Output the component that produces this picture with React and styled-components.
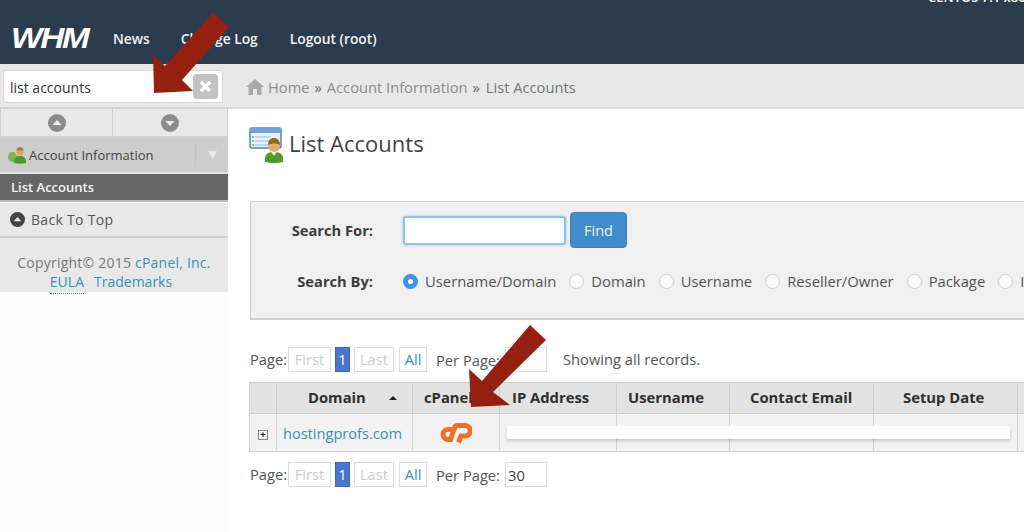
import React from 'react';
import styled, { createGlobalStyle } from 'styled-components';

const GlobalStyle = createGlobalStyle`
  html, body {
    margin: 0;
    width: 1024px;
    height: 532px;
    overflow: hidden;
    background: #fff;
    font-family: "Open Sans", "Liberation Sans", sans-serif;
  }
  * { box-sizing: border-box; }
`;

const Page = styled.div`
  position: relative;
  width: 1024px;
  height: 532px;
  overflow: hidden;
`;

const Header = styled.header`
  height: 64px;
  background: #2b3c4e;
  overflow: hidden;
`;

const ServerInfo = styled.div`
  height: 15px;
  margin-top: -3px;
  padding-left: 928px;
  font-size: 13px;
  line-height: 0;
  font-weight: 600;
  color: #fff;
  white-space: nowrap;
`;

const Nav = styled.nav`
  display: flex;
  align-items: center;
  height: 52px;
  padding-left: 11px;
`;

const Logo = styled.div`
  width: 102px;
  font-family: "Liberation Sans", sans-serif;
  font-size: 29px;
  font-weight: 700;
  font-style: italic;
  letter-spacing: -2px;
  color: #fff;
  transform: scaleX(1.15);
  transform-origin: left center;
`;

const NavLink = styled.a`
  margin-right: ${p => p.$gap}px;
  font-size: 13.8px;
  font-weight: 600;
  color: #f2f4f5;
`;

const Layout = styled.div`
  display: grid;
  grid-template-columns: 228px 1fr;
  height: 468px;
`;

const Sidebar = styled.aside`
  display: flex;
  flex-direction: column;
  background: #fdfdfd;
`;

const SearchRow = styled.div`
  height: 45px;
  padding: 6px 5px 5px 3px;
  background: #e8e8e8;
  border-bottom: 2px solid #d4d4d4;
`;

const SearchBox = styled.div`
  display: flex;
  align-items: center;
  justify-content: space-between;
  height: 33px;
  padding: 2px 4px 0 6px;
  background: #fff;
  border: 1px solid #d8d8d8;
  border-radius: 3px;
  font-size: 14px;
  color: #333;
`;

const ClearButton = styled.span`
  display: flex;
  align-items: center;
  justify-content: center;
  width: 25px;
  height: 25px;
  margin-top: -2px;
  background: #c2c2c2;
  border-radius: 4px;
`;

const ArrowRow = styled.div`
  display: grid;
  grid-template-columns: 113px 1fr;
  height: 29px;
  background: #e8e8e8;
  border-bottom: 2px solid #d0d0d0;
`;

const ArrowCell = styled.div`
  display: flex;
  align-items: center;
  justify-content: center;
  border-left: ${p => (p.$first ? '1px solid #d0d0d0' : 'none')};
  border-right: 1px solid #d0d0d0;
`;

const GroupRow = styled.div`
  display: flex;
  align-items: center;
  height: 36px;
  padding-left: 8px;
  background: #cdcdcd;
  font-size: 13px;
  letter-spacing: 0;
  color: #444;
  border-bottom: 2px solid #e2e2e2;
`;

const GroupLabel = styled.span`
  flex: 1;
  margin-left: 3px;
`;

const GroupToggle = styled.span`
  display: flex;
  align-items: center;
  justify-content: center;
  width: 33px;
  height: 22px;
  border-left: 1px solid #c2c2c2;
`;

const ActiveItem = styled.div`
  display: flex;
  align-items: center;
  height: 28px;
  padding-left: 11px;
  background: #666;
  font-size: 13px;
  font-weight: 600;
  color: #f4f4f4;
  border-bottom: 2px solid #bbb;
`;

const BackToTop = styled.div`
  display: flex;
  align-items: center;
  gap: 6px;
  height: 36px;
  padding-left: 10px;
  background: #e8e8e8;
  font-size: 14px;
  letter-spacing: 0.3px;
  color: #555;
  border-top: 1px solid #fafafa;
  border-bottom: 2px solid #ccc;
`;

const Copyright = styled.div`
  height: 54px;
  padding-top: 15px;
  background: #e8e8e8;
  font-size: 14px;
  line-height: 19px;
  text-align: center;
  color: #777;
`;

const CopyLine = styled.div`
  letter-spacing: ${p => p.$spacing || 0}px;
  padding-right: ${p => p.$right || 0}px;
`;

const BlueLink = styled.a`
  color: #3a8fb7;
`;

const EulaLink = styled(BlueLink)`
  display: inline-block;
  height: 22px;
  margin-right: 10px;
  border-bottom: 1px dotted #3a8fb7;
`;

const Main = styled.main`
  display: flex;
  flex-direction: column;
  min-width: 0;
`;

const Breadcrumb = styled.div`
  display: flex;
  align-items: center;
  height: 45px;
  padding: 2px 0 0 18px;
  background: #e8e8e8;
  border-bottom: 2px solid #dcdcdc;
  font-size: 14.7px;
  color: #888;
`;

const Crumb = styled.span`
  margin-left: ${p => p.$left || 0}px;
  color: ${p => p.$color || '#8c8c8c'};
`;

const TitleRow = styled.div`
  display: flex;
  align-items: center;
  gap: 4px;
  height: 37px;
  margin: 18px 0 37px 21px;
`;

const Title = styled.h1`
  margin: 0;
  padding-bottom: 6px;
  font-size: 22px;
  font-weight: 400;
  color: #444;
`;

const SearchPanel = styled.section`
  height: 119px;
  margin-left: 22px;
  background: #f0f0f0;
  border: 1px solid #cfcfcf;
  border-right: none;
  border-bottom-width: 2px;
`;

const PanelRow = styled.div`
  display: flex;
  align-items: center;
  height: ${p => p.$height}px;
  margin-top: ${p => p.$top || 0}px;
`;

const PanelLabel = styled.label`
  flex: none;
  width: 122px;
  margin-right: 30px;
  text-align: right;
  font-size: 14.7px;
  font-weight: 700;
  color: #3c3c3c;
`;

const TextInput = styled.div`
  width: 163px;
  height: 29px;
  margin-right: 4px;
  background: #fff;
  border: 2px solid #8fc1ea;
  border-radius: 3px;
  box-shadow: 0 0 3px #9fcaf0;
`;

const FindButton = styled.button`
  width: 57px;
  height: 36px;
  background: #428bca;
  border: 1px solid #3d84bf;
  border-radius: 4px;
  font: 400 14.5px "Open Sans", sans-serif;
  color: #e8f1f8;
`;

const RadioOption = styled.span`
  display: flex;
  flex: none;
  align-items: center;
  gap: 7px;
  margin-right: ${p => p.$gap}px;
  font-size: 14.8px;
  color: #555;
`;

const Radio = styled.span`
  flex: none;
  width: 15px;
  height: 15px;
  border-radius: 50%;
  background: ${p => (p.$on ? '#3f93e6' : '#fbfbfb')};
  border: ${p => (p.$on ? 'none' : '1px solid #cfcfcf')};
  display: flex;
  align-items: center;
  justify-content: center;

  &::after {
    content: '';
    display: ${p => (p.$on ? 'block' : 'none')};
    width: 5px;
    height: 5px;
    border-radius: 50%;
    background: #fff;
  }
`;

const Pager = styled.div`
  display: flex;
  align-items: center;
  height: 25px;
  margin: ${p => p.$margin};
  padding-left: 22px;
  font-size: 14.7px;
  color: #555;
`;

const PagerLabel = styled.span`
  width: 38px;
  margin-bottom: 2px;
`;

const PagerButton = styled.span`
  display: flex;
  align-items: center;
  justify-content: center;
  width: ${p => p.$width}px;
  height: 25px;
  margin-left: ${p => p.$left}px;
  padding-bottom: 2px;
  background: ${p => (p.$active ? '#4a76d0' : '#fff')};
  border: 1px solid ${p => (p.$active ? '#3f66b5' : '#ddd')};
  color: ${p => (p.$active ? '#f2f5fb' : p.$link ? '#3a8fb7' : '#ccc')};
`;

const PerPageBox = styled.span`
  display: flex;
  align-items: center;
  width: 42px;
  height: 25px;
  margin-left: 5px;
  padding-left: 2px;
  background: #fff;
  border: 1px solid #ddd;
  color: #444;
`;

const ShowingText = styled.span`
  margin: 0 0 2px 16px;
  white-space: nowrap;
`;

const TableFrame = styled.div`
  margin-left: 21px;
  overflow: hidden;
`;

const Table = styled.table`
  table-layout: fixed;
  width: 820px;
  border-collapse: collapse;
`;

const HeadCell = styled.th`
  width: ${p => p.$width}px;
  height: 31px;
  padding: 0 0 2px ${p => p.$pad || 0}px;
  background: #e2e2e2;
  border: 1px solid #cfcfcf;
  font-size: 14.8px;
  font-weight: 700;
  color: #2f2f2f;
  text-align: left;
  white-space: nowrap;
  overflow: hidden;
`;

const BodyCell = styled.td`
  height: 38px;
  padding: 0 ${p => p.$right || 0}px 0 0;
  background: #f2f2f2;
  border: 1px solid #d2d2d2;
  text-align: center;
  font-size: 14.6px;
  color: #3a8fb7;
`;

const SortMark = styled.span`
  display: inline-block;
  margin-left: 23px;
  border-left: 4px solid transparent;
  border-right: 4px solid transparent;
  border-bottom: 4px solid #222;
  vertical-align: 3px;
`;

const ExpandBox = styled.span`
  display: inline-flex;
  align-items: center;
  justify-content: center;
  width: 10px;
  height: 10px;
  vertical-align: 1px;
  background: #f8f8f8;
  border: 1px solid #888;
  font: 700 9px/1 "Liberation Sans", sans-serif;
  color: #222;
`;

// redaction strip and the two annotation arrows sit on top of the screenshot
const Redaction = styled.div`
  position: absolute;
  left: 507px;
  top: 426px;
  width: 503px;
  height: 13px;
  background: #fff;
  box-shadow: 0 2px 3px rgba(0, 0, 0, 0.18);
`;

const Annotation = styled.svg`
  position: absolute;
  left: 0;
  top: 0;
  pointer-events: none;
`;

const LogoMark = styled.svg`
  vertical-align: middle;
`;

const CircleArrow = ({ up, color = '#8c8c8c', size = 18 }) => (
  <svg width={size} height={size} viewBox="0 0 18 18">
    <circle cx="9" cy="9" r="9" fill={color} />
    <path d={up ? 'M4.5 11 L9 6 L13.5 11 Z' : 'M4.5 7 L9 12 L13.5 7 Z'} fill="#eee" />
  </svg>
);

const UserIcon = () => (
  <svg width="36" height="37" viewBox="0 0 36 37">
    <rect x="1" y="1" width="31" height="20" rx="2" fill="#eaf2fb" stroke="#4a86c5" strokeWidth="1.5" />
    <rect x="1" y="1" width="31" height="5" fill="#6fa3dc" />
    <path d="M6 10h16M6 14h16M6 18h16" stroke="#9db8d4" strokeWidth="1" />
    <path d="M3 10h2M3 14h2M3 18h2" stroke="#6db04a" strokeWidth="1.4" />
    <path d="M16 35c-1-8 3-10 9-10s10 2 9 10c-6 1.500-12 1.500-18 0z" fill="#4f9a2c" />
    <path d="M22 25l3 4 3-4z" fill="#e6f2d8" />
    <circle cx="25" cy="19" r="6" fill="#e3ad6f" />
    <path d="M19 18c0-5 3-7 6-7s6 2 6 7c-3-2-8-2-12 0z" fill="#8a6a22" />
  </svg>
);

const MoneyUserIcon = () => (
  <svg width="18" height="17" viewBox="0 0 18 17">
    <ellipse cx="4.500" cy="10" rx="4.500" ry="5" fill="#7cb74d" />
    <circle cx="12" cy="5" r="3.500" fill="#e0a468" />
    <path d="M8.500 4c0-3 2-4 3.500-4s3.500 1 3.500 4c-2-1-5-1-7 0z" fill="#a8782a" />
    <path d="M6 16c-.5-5 2-7 6-7s6.500 2 6 7c-4 1-8 1-12 0z" fill="#4f9a33" />
  </svg>
);

const HomeIcon = () => (
  <svg width="18" height="17" viewBox="0 0 18 17">
    <path d="M9 1 L18 9 L15.500 9 L15.500 17 L11 17 L11 11 L7 11 L7 17 L2.500 17 L2.500 9 L0 9 Z" fill="#a9a9a9" />
  </svg>
);

const CpanelLogo = () => (
  <LogoMark width="32" height="21" viewBox="0 0 32 21">
    <path
      d="M13 6.500 H8 a5 5 0 0 0 0 10 H10.500 L14.500 5 a3 3 0 0 1 2.500-2.500 H25 a5.200 5.200 0 0 1 0 10.500 H21 L18.500 19.500"
      fill="none"
      stroke="#f26f28"
      strokeWidth="5"
    />
  </LogoMark>
);

const App = () => (
  <Page>
    <GlobalStyle />
    <Header>
      <ServerInfo>CENTOS 7.1 x86_64</ServerInfo>
      <Nav>
        <Logo>WHM</Logo>
        <NavLink $gap={31}>News</NavLink>
        <NavLink $gap={32}>Change Log</NavLink>
        <NavLink $gap={0}>Logout (root)</NavLink>
      </Nav>
    </Header>
    <Layout>
      <Sidebar>
        <SearchRow>
          <SearchBox>
            list accounts
            <ClearButton>
              <svg width="13" height="13" viewBox="0 0 13 13">
                <path d="M2 2 L11 11 M11 2 L2 11" stroke="#fff" strokeWidth="3.400" />
              </svg>
            </ClearButton>
          </SearchBox>
        </SearchRow>
        <ArrowRow>
          <ArrowCell $first><CircleArrow up /></ArrowCell>
          <ArrowCell><CircleArrow /></ArrowCell>
        </ArrowRow>
        <GroupRow>
          <MoneyUserIcon />
          <GroupLabel>Account Information</GroupLabel>
          <GroupToggle>
            <svg width="9" height="8" viewBox="0 0 9 8"><path d="M0 0 H9 L4.500 8 Z" fill="#eaeaea" /></svg>
          </GroupToggle>
        </GroupRow>
        <ActiveItem>List Accounts</ActiveItem>
        <BackToTop>
          <CircleArrow up color="#444" size={15} />
          Back To Top
        </BackToTop>
        <Copyright>
          <CopyLine $spacing={0.22}>
            Copyright© 2015 <BlueLink>cPanel, Inc.</BlueLink>
          </CopyLine>
          <CopyLine $right={6}>
            <EulaLink>EULA</EulaLink>
            <BlueLink>Trademarks</BlueLink>
          </CopyLine>
        </Copyright>
      </Sidebar>
      <Main>
        <Breadcrumb>
          <HomeIcon />
          <Crumb $left={4}>Home</Crumb>
          <Crumb $left={5} $color="#666">»</Crumb>
          <Crumb $left={5}>Account Information</Crumb>
          <Crumb $left={5} $color="#666">»</Crumb>
          <Crumb $left={6} $color="#777">List Accounts</Crumb>
        </Breadcrumb>
        <TitleRow>
          <UserIcon />
          <Title>List Accounts</Title>
        </TitleRow>
        <SearchPanel>
          <PanelRow $height={36} $top={10}>
            <PanelLabel>Search For:</PanelLabel>
            <TextInput />
            <FindButton>Find</FindButton>
          </PanelRow>
          <PanelRow $height={30} $top={18}>
            <PanelLabel>Search By:</PanelLabel>
            <RadioOption $gap={13}><Radio $on />Username/Domain</RadioOption>
            <RadioOption $gap={13}><Radio />Domain</RadioOption>
            <RadioOption $gap={13}><Radio />Username</RadioOption>
            <RadioOption $gap={13}><Radio />Reseller/Owner</RadioOption>
            <RadioOption $gap={13}><Radio />Package</RadioOption>
            <RadioOption $gap={0}><Radio />IP</RadioOption>
          </PanelRow>
        </SearchPanel>
        <Pager $margin="27px 0 10px">
          <PagerLabel>Page:</PagerLabel>
          <PagerButton $width={43} $left={0}>First</PagerButton>
          <PagerButton $width={15} $left={4} $active>1</PagerButton>
          <PagerButton $width={40} $left={4}>Last</PagerButton>
          <PagerButton $width={28} $left={5} $link>All</PagerButton>
          <Crumb $left={9} $color="#555">Per Page:</Crumb>
          <PerPageBox />
          <ShowingText>Showing all records.</ShowingText>
        </Pager>
        <TableFrame>
          <Table>
            <thead>
              <tr>
                <HeadCell $width={27} />
                <HeadCell $width={136} $pad={31}>Domain<SortMark /></HeadCell>
                <HeadCell $width={87} $pad={11}>cPanel</HeadCell>
                <HeadCell $width={117} $pad={12}>IP Address</HeadCell>
                <HeadCell $width={113} $pad={11}>Username</HeadCell>
                <HeadCell $width={144} $pad={20}>Contact Email</HeadCell>
                <HeadCell $width={144} $pad={29}>Setup Date</HeadCell>
                <HeadCell $width={52} />
              </tr>
            </thead>
            <tbody>
              <tr>
                <BodyCell><ExpandBox>+</ExpandBox></BodyCell>
                <BodyCell $right={4}>hostingprofs.com</BodyCell>
                <BodyCell><CpanelLogo /></BodyCell>
                <BodyCell />
                <BodyCell />
                <BodyCell />
                <BodyCell />
                <BodyCell />
              </tr>
            </tbody>
          </Table>
        </TableFrame>
        <Pager $margin="10px 0 0">
          <PagerLabel>Page:</PagerLabel>
          <PagerButton $width={43} $left={0}>First</PagerButton>
          <PagerButton $width={15} $left={4} $active>1</PagerButton>
          <PagerButton $width={40} $left={4}>Last</PagerButton>
          <PagerButton $width={28} $left={5} $link>All</PagerButton>
          <Crumb $left={9} $color="#555">Per Page:</Crumb>
          <PerPageBox>30</PerPageBox>
        </Pager>
      </Main>
    </Layout>
    <Redaction />
    <Annotation width="1024" height="532" viewBox="0 0 1024 532">
      <path d="M213 13 L229 27 L182 80 L193 91 L154 93 L153 55 L165 66 Z" fill="#951f10" />
      <path d="M530 325 L546 340 L493 392 L510 405 L471 407 L469 369 L482 381 Z" fill="#951f10" />
    </Annotation>
  </Page>
);

export default App;
